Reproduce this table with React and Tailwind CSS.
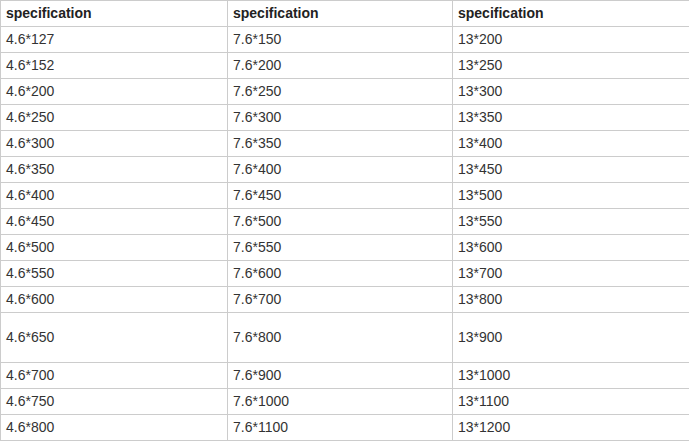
import React from "react";

const rows = [
  ["4.6*127", "7.6*150", "13*200"],
  ["4.6*152", "7.6*200", "13*250"],
  ["4.6*200", "7.6*250", "13*300"],
  ["4.6*250", "7.6*300", "13*350"],
  ["4.6*300", "7.6*350", "13*400"],
  ["4.6*350", "7.6*400", "13*450"],
  ["4.6*400", "7.6*450", "13*500"],
  ["4.6*450", "7.6*500", "13*550"],
  ["4.6*500", "7.6*550", "13*600"],
  ["4.6*550", "7.6*600", "13*700"],
  ["4.6*600", "7.6*700", "13*800"],
  ["4.6*650", "7.6*800", "13*900", true],
  ["4.6*700", "7.6*900", "13*1000"],
  ["4.6*750", "7.6*1000", "13*1100"],
  ["4.6*800", "7.6*1100", "13*1200"],
];

const App = () => {
  return (
    <div className="bg-white w-[689px] h-[444px] font-['Liberation_Sans',Arial,sans-serif] text-[14px]">
      <table className="w-[689px] border-collapse table-fixed">
        <colgroup>
          <col className="w-[227px]" />
          <col className="w-[225px]" />
          <col className="w-[237px]" />
        </colgroup>
        <thead>
          <tr className="h-[26px]">
            {["specification", "specification", "specification"].map((h, i) => (
              <th
                key={i}
                className="border border-[#cccccc] px-[5px] py-0 text-left font-bold text-[#222222] align-middle"
              >
                {h}
              </th>
            ))}
          </tr>
        </thead>
        <tbody>
          {rows.map((r, i) => (
            <tr key={i} className={r[3] ? "h-[50px]" : "h-[26px]"}>
              {r.slice(0, 3).map((c, j) => (
                <td
                  key={j}
                  className="border border-[#cccccc] px-[5px] py-0 text-[#333333] align-middle"
                >
                  {c}
                </td>
              ))}
            </tr>
          ))}
        </tbody>
      </table>
    </div>
  );
};

export default App;
